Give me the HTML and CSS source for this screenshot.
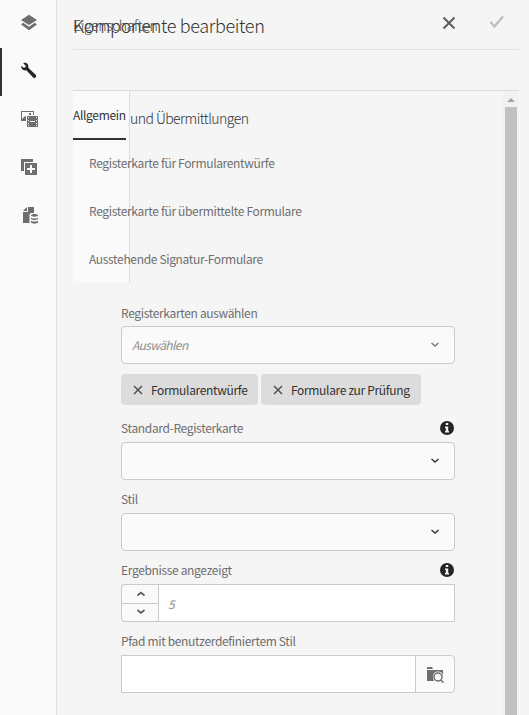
FILE: index.html
```html
<!DOCTYPE html>
<html lang="de">
<head>
<meta charset="utf-8">
<title>Komponente bearbeiten</title>
<link rel="stylesheet" href="styles.css">
</head>
<body>
<div class="app">
  <nav class="rail">
    <a class="rail-item"><svg viewBox="0 0 18 18"><path d="M9 .8 17 6 9 11 1 6Z"/><path d="M3.300 8.800 1 10.500 9 16.200l8-5.700-2.300-1.700L9 12.700Z"/></svg></a>
    <a class="rail-item active"><svg viewBox="0 0 18 18"><path d="M3.200 1.300C6-.2 9 2 8.300 5.700L15.900 12.900C17.100 14.300 14.900 17.100 13.400 15.800L6.300 8.300C3.500 8.900 1 7 1.100 3.700L4 6.100 6.200 4.200Z"/></svg></a>
    <a class="rail-item"><svg viewBox="0 0 18 18"><path fill-rule="evenodd" d="M1 1h13v4h-1V2H2v7l3-3 1 1v4H1ZM9 3h2v2H9Z"/><path fill-rule="evenodd" d="M7 6h11v11H7ZM8 7v1h1V7Zm0 3v1h1v-1Zm0 3v1h1v-1Zm0 2v1h1v-1Zm8-8v1h1V7Zm0 3v1h1v-1Zm0 3v1h1v-1Zm0 2v1h1v-1Zm-6-4v1h5v-1Z"/></svg></a>
    <a class="rail-item"><svg viewBox="0 0 18 18"><path d="M1 1h12v3H4v9H1Z"/><path fill-rule="evenodd" d="M5 5h12v12H5ZM10 7v3H7v2h3v3h2v-3h3v-2h-3V7Z"/></svg></a>
    <a class="rail-item"><svg viewBox="0 0 18 18"><path d="M8 1h6v6h-3L9.500 8v9H3V6h5Z"/><path d="M7 1v4H3Z"/><path d="M11 9.500c0-2 7-2 7 0 0 1.500-7 1.500-7 0Zm0 2.200c2 1.200 5 1.200 7 0v1.300c-1.500 1.400-5.500 1.400-7 0Zm0 3c2 1.200 5 1.200 7 0v1.800c-1.500 1.500-5.500 1.500-7 0Z"/></svg></a>
  </nav>
  <main class="dialog">
    <header class="dialog-header">
      <h1>Komponente bearbeiten</h1>
      <span class="subtitle">Eigenschaften</span>
      <svg class="close" viewBox="0 0 14 14"><path d="M1.500 1.500 12.500 12.500M12.500 1.500 1.500 12.500"/></svg>
      <svg class="confirm" viewBox="0 0 16 14"><path d="M1.500 7 5.500 11.500 14 1.500"/></svg>
    </header>
    <section class="scroll-area">
      <div class="content">
        <h2>und Übermittlungen</h2>
        <form class="fields">
          <label class="label l-tabs"><span>Registerkarten auswählen</span></label>
          <div class="select"><i class="placeholder">Auswählen</i><svg class="chevron muted" viewBox="0 0 10 6"><path d="M1.500 1 5 4 8.500 1"/></svg></div>
          <div class="tags">
            <span class="tag t-one"><svg viewBox="0 0 10 10"><path d="M1 1 9 9M9 1 1 9"/></svg><span>Formularentwürfe</span></span>
            <span class="tag t-two"><svg viewBox="0 0 10 10"><path d="M1 1 9 9M9 1 1 9"/></svg><span>Formulare zur Prüfung</span></span>
          </div>
          <label class="label"><span>Standard-Registerkarte</span><svg class="info" viewBox="0 0 14 14"><circle cx="7" cy="7" r="7"/><path d="M5.800 2h2.400v2H5.800ZM5 5.500h3.200V10H9v1.500H5V10h.8V7H5Z"/></svg></label>
          <div class="select"><svg class="chevron" viewBox="0 0 10 6"><path d="M1.500 1 5 4 8.500 1"/></svg></div>
          <label class="label"><span>Stil</span></label>
          <div class="select"><svg class="chevron" viewBox="0 0 10 6"><path d="M1.500 1 5 4 8.500 1"/></svg></div>
          <label class="label"><span>Ergebnisse angezeigt</span><svg class="info" viewBox="0 0 14 14"><circle cx="7" cy="7" r="7"/><path d="M5.800 2h2.400v2H5.800ZM5 5.500h3.200V10H9v1.500H5V10h.8V7H5Z"/></svg></label>
          <div class="number">
            <div class="stepper"><b><svg viewBox="0 0 10 6"><path d="M1.500 4.500 5 1.500 8.500 4.500"/></svg></b><b><svg viewBox="0 0 10 6"><path d="M1.500 1 5 4 8.500 1"/></svg></b></div>
            <i class="placeholder">5</i>
          </div>
          <label class="label"><span>Pfad mit benutzerdefiniertem Stil</span></label>
          <div class="path">
            <div class="path-value"></div>
            <div class="browse"><svg viewBox="0 0 18 18"><path d="M1 1h5l1 2H1ZM1 4h16v6c-.5-6-10-6-10 1 0 2 .5 3 1 4H1Z"/><path class="lens" d="M16 11a4 4 0 1 1-8 0 4 4 0 0 1 8 0Zm-1.200 3 2.700 2.700"/></svg></div>
          </div>
        </form>
      </div>
      <aside class="tabs">
        <a class="tab selected"><span>Allgemein</span></a>
        <a class="tab">Registerkarte für Formularentwürfe</a>
        <a class="tab">Registerkarte für übermittelte Formulare</a>
        <a class="tab">Ausstehende Signatur-Formulare</a>
      </aside>
      <div class="scrollbar"><div class="arrow"></div><div class="thumb"></div></div>
    </section>
  </main>
</div>
</body>
</html>
```
FILE: styles.css
```css
* { box-sizing: border-box; }
body {
  margin: 0;
  font: 12px/18px "Noto Sans CJK SC", "Noto Sans", sans-serif;
  letter-spacing: -0.34px;
  color: #6e6e6e;
  background: #f5f5f5;
  overflow: hidden;
}
svg { display: block; flex: none; }
h1, h2 { margin: 0; font-weight: 300; white-space: nowrap; }
.app { display: flex; height: 715px; }
.rail { width: 57px; background: #fafafa; border-right: 1px solid #e1e1e1; flex: none; }
.rail-item { display: flex; height: 48px; padding: 14px 0 0 20px; border-left: 0 solid #323232; }
.rail-item svg { width: 18px; height: 18px; fill: #6e6e6e; }
.rail-item.active { border-left-width: 2px; padding-left: 18px; }
.rail-item.active svg { fill: #252525; }

.dialog { width: 446px; margin-left: 16px; display: flex; flex-direction: column; }
.dialog-header { position: relative; display: flex; height: 50px; border-bottom: 1px solid #e1e1e1; }
.dialog-header h1 { flex: 1; font-size: 18px; line-height: 50px; color: #323232; }
.subtitle { position: absolute; left: 0; top: 0; font-size: 14px; font-weight: 300; line-height: 50px; color: #4b4b4b; }
.close { width: 14px; height: 14px; margin: 16px 33px 0 0; fill: none; stroke: #5c5c5c; stroke-width: 2; }
.confirm { width: 16px; height: 14px; margin: 15px 14px 0 0; fill: none; stroke: #bebebe; stroke-width: 2.4; }

.scroll-area { position: relative; display: flex; width: 446px; height: 625px; margin-top: 40px; border-top: 1px solid #dcdcdc; }
.content { flex: 1; }
h2 { padding: 14px 0 0 57px; font-size: 14px; line-height: 26px; letter-spacing: -0.55px; color: #323232; }
.fields { width: 334px; margin: 173px 0 0 48px; }
.label { display: flex; justify-content: space-between; height: 23px; margin-top: 10px; line-height: 18px; }
.label.l-tabs { margin-top: 0; height: 22px; line-height: 17px; }
.info { width: 14px; height: 14px; margin: 2px 1px 0 0; fill: #252525; }
.info path { fill: #f5f5f5; }
.select { display: flex; align-items: center; height: 38px; padding: 0 14px 0 10px; background: #fafafa; border: 1px solid #cacaca; border-radius: 4px; }
.placeholder { color: #8e8e8e; letter-spacing: -0.6px; }
.chevron { width: 10px; height: 6px; margin-left: auto; fill: none; stroke: #323232; stroke-width: 1.5; }
.chevron.muted { stroke: #7b7b7b; }
.tags { display: flex; gap: 3px; margin: 10px 0 14px; }
.tag { display: flex; align-items: center; height: 31px; padding-left: 12px; gap: 8px; background: #dcdcdc; border-radius: 4px; color: #323232; white-space: nowrap; }
.tag svg { width: 10px; height: 10px; fill: none; stroke: #4b4b4b; stroke-width: 1.4; }
.t-one { width: 137px; }
.t-two { width: 160px; }
.number, .path { display: flex; height: 38px; }
.stepper { display: flex; flex-direction: column; width: 38px; border: 1px solid #cacaca; border-right: 0; border-radius: 4px 0 0 4px; background: #fafafa; }
.stepper b { display: flex; flex: 1; align-items: center; justify-content: center; }
.stepper b + b { border-top: 1px solid #cacaca; }
.stepper svg { width: 10px; height: 6px; fill: none; stroke: #5c5c5c; stroke-width: 1.7; }
.number .placeholder { flex: 1; padding-left: 9px; line-height: 37px; background: #fff; border: 1px solid #cacaca; margin-left: -1px; }
.path-value { flex: 1; background: #fff; border: 1px solid #cacaca; }
.browse { width: 40px; display: flex; padding: 10px 0 0 10px; margin-left: -1px; background: #fafafa; border: 1px solid #cacaca; border-radius: 0 4px 4px 0; }
.browse svg { width: 18px; height: 18px; fill: #6e6e6e; }
.browse .lens { fill: none; stroke: #6e6e6e; stroke-width: 1.5; }

.tabs { position: absolute; left: 0; top: 0; width: 57px; height: 192px; background: #fafafa; border-right: 1px solid #dcdcdc; }
.tab { display: block; height: 48px; padding-left: 16px; line-height: 47px; white-space: nowrap; }
.tab.selected { display: flex; padding: 0; color: #323232; }
.selected span { width: 53px; height: 49px; border-bottom: 2px solid #323232; }

.scrollbar { width: 16px; background: #f1f1f1; flex: none; padding: 7px 2px 0; }
.arrow { width: 8px; height: 4px; margin: 0 2px 5px; background: #a3a3a3; clip-path: polygon(50% 0, 100% 100%, 0 100%); }
.thumb { width: 12px; height: 608px; background: #c1c1c1; }
```
